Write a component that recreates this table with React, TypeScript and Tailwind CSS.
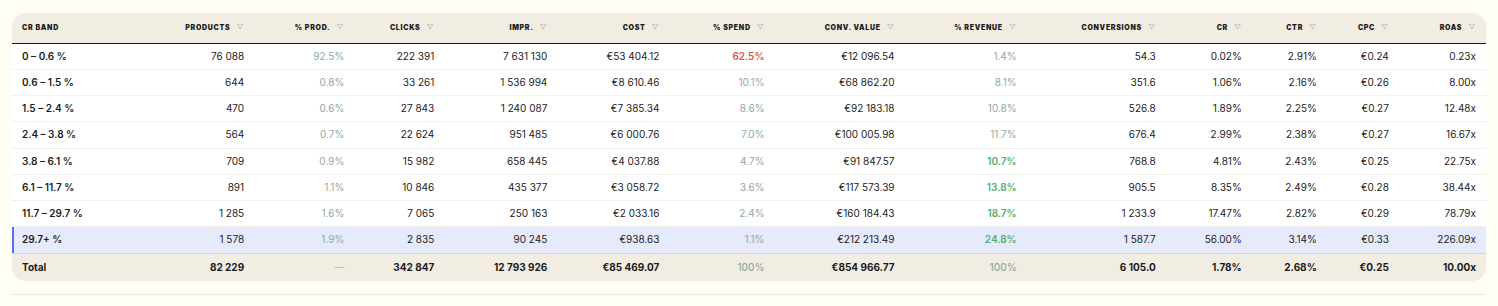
import React from "react";

type Row = {
  band: string;
  products: string;
  prodPct: string;
  clicks: string;
  impr: string;
  cost: string;
  spendPct: string;
  spendHot?: boolean;
  convValue: string;
  revPct: string;
  revGood?: boolean;
  conversions: string;
  cr: string;
  ctr: string;
  cpc: string;
  roas: string;
  active?: boolean;
};

const s = "\u00a0";

const rows: Row[] = [
  { band: "0 – 0.6 %", products: `76${s}088`, prodPct: "92.5%", clicks: `222${s}391`, impr: `7${s}631${s}130`, cost: `€53${s}404.12`, spendPct: "62.5%", spendHot: true, convValue: `€12${s}096.54`, revPct: "1.4%", conversions: "54.3", cr: "0.02%", ctr: "2.91%", cpc: "€0.24", roas: "0.23x" },
  { band: "0.6 – 1.5 %", products: "644", prodPct: "0.8%", clicks: `33${s}261`, impr: `1${s}536${s}994`, cost: `€8${s}610.46`, spendPct: "10.1%", convValue: `€68${s}862.20`, revPct: "8.1%", conversions: "351.6", cr: "1.06%", ctr: "2.16%", cpc: "€0.26", roas: "8.00x" },
  { band: "1.5 – 2.4 %", products: "470", prodPct: "0.6%", clicks: `27${s}843`, impr: `1${s}240${s}087`, cost: `€7${s}385.34`, spendPct: "8.6%", convValue: `€92${s}183.18`, revPct: "10.8%", conversions: "526.8", cr: "1.89%", ctr: "2.25%", cpc: "€0.27", roas: "12.48x" },
  { band: "2.4 – 3.8 %", products: "564", prodPct: "0.7%", clicks: `22${s}624`, impr: `951${s}485`, cost: `€6${s}000.76`, spendPct: "7.0%", convValue: `€100${s}005.98`, revPct: "11.7%", conversions: "676.4", cr: "2.99%", ctr: "2.38%", cpc: "€0.27", roas: "16.67x" },
  { band: "3.8 – 6.1 %", products: "709", prodPct: "0.9%", clicks: `15${s}982`, impr: `658${s}445`, cost: `€4${s}037.88`, spendPct: "4.7%", convValue: `€91${s}847.57`, revPct: "10.7%", revGood: true, conversions: "768.8", cr: "4.81%", ctr: "2.43%", cpc: "€0.25", roas: "22.75x" },
  { band: "6.1 – 11.7 %", products: "891", prodPct: "1.1%", clicks: `10${s}846`, impr: `435${s}377`, cost: `€3${s}058.72`, spendPct: "3.6%", convValue: `€117${s}573.39`, revPct: "13.8%", revGood: true, conversions: "905.5", cr: "8.35%", ctr: "2.49%", cpc: "€0.28", roas: "38.44x" },
  { band: "11.7 – 29.7 %", products: `1${s}285`, prodPct: "1.6%", clicks: `7${s}065`, impr: `250${s}163`, cost: `€2${s}033.16`, spendPct: "2.4%", convValue: `€160${s}184.43`, revPct: "18.7%", revGood: true, conversions: `1${s}233.9`, cr: "17.47%", ctr: "2.82%", cpc: "€0.29", roas: "78.79x" },
  { band: "29.7+ %", products: `1${s}578`, prodPct: "1.9%", clicks: `2${s}835`, impr: `90${s}245`, cost: "€938.63", spendPct: "1.1%", convValue: `€212${s}213.49`, revPct: "24.8%", revGood: true, conversions: `1${s}587.7`, cr: "56.00%", ctr: "3.14%", cpc: "€0.33", roas: "226.09x", active: true },
];

const muted = "text-[#8fa9a2]";

function Head({ label, w, first }: { label: string; w: string; first?: boolean }) {
  return (
    <th
      className={`${w} px-[10px] text-[7px] font-black uppercase tracking-[0.1em] whitespace-nowrap ${first ? "text-left" : "text-right"}`}
    >
      {label}
      {!first && <span className="ml-[6px] text-[7px] font-normal text-[#b9b9b2]">▽</span>}
    </th>
  );
}

function Cell({ children, className = "" }: { children: React.ReactNode; className?: string }) {
  return <td className={`px-[10px] text-right whitespace-nowrap ${className}`}>{children}</td>;
}

export default function App() {
  return (
    <div className="min-h-screen bg-[#fffef5] px-[12px] pt-[13px] font-['Inter','Liberation_Sans',sans-serif] text-[10px] text-[#1c1c1c]">
      <div className="overflow-hidden rounded-[14px] bg-white">
        <table className="w-full table-fixed border-collapse">
          <thead>
            <tr className="h-[30px] border-b-[1.5px] border-[#1c1c1c] bg-[#f2ede3]">
              <Head label="CR Band" w="w-[142px]" first />
              <Head label="Products" w="w-[100px]" />
              <Head label="% Prod." w="w-[100px]" />
              <Head label="Clicks" w="w-[90px]" />
              <Head label="Impr." w="w-[113px]" />
              <Head label="Cost" w="w-[112px]" />
              <Head label="% Spend" w="w-[105px]" />
              <Head label="Conv. Value" w="w-[130px]" />
              <Head label="% Revenue" w="w-[122px]" />
              <Head label="Conversions" w="w-[139px]" />
              <Head label="CR" w="w-[86px]" />
              <Head label="CTR" w="w-[75px]" />
              <Head label="CPC" w="w-[72px]" />
              <Head label="ROAS" w="w-[87px]" />
            </tr>
          </thead>
          <tbody>
            {rows.map((r) => (
              <tr
                key={r.band}
                className={`h-[26.25px] ${r.active ? "border-b border-[#c9d2f5] bg-[#e5eafd]" : "border-b border-[#f0f0ec]"}`}
              >
                <td
                  className={`px-[10px] text-left font-semibold whitespace-nowrap ${r.active ? "shadow-[inset_2px_0_0_#5b6cf0]" : ""}`}
                >
                  {r.band}
                </td>
                <Cell>{r.products}</Cell>
                <Cell className={muted}>{r.prodPct}</Cell>
                <Cell>{r.clicks}</Cell>
                <Cell>{r.impr}</Cell>
                <Cell>{r.cost}</Cell>
                <Cell className={r.spendHot ? "font-semibold text-[#e4533c]" : muted}>{r.spendPct}</Cell>
                <Cell>{r.convValue}</Cell>
                <Cell className={r.revGood ? "font-semibold text-[#4fae6d]" : muted}>{r.revPct}</Cell>
                <Cell>{r.conversions}</Cell>
                <Cell>{r.cr}</Cell>
                <Cell>{r.ctr}</Cell>
                <Cell>{r.cpc}</Cell>
                <Cell>{r.roas}</Cell>
              </tr>
            ))}
          </tbody>
          <tfoot>
            <tr className="h-[28px] bg-[#f2ede3] font-bold">
              <td className="px-[10px] text-left">Total</td>
              <Cell>{`82${s}229`}</Cell>
              <Cell className="font-normal text-[#a9bcb6]">—</Cell>
              <Cell>{`342${s}847`}</Cell>
              <Cell>{`12${s}793${s}926`}</Cell>
              <Cell>{`€85${s}469.07`}</Cell>
              <Cell className={`font-medium ${muted}`}>100%</Cell>
              <Cell>{`€854${s}966.77`}</Cell>
              <Cell className={`font-medium ${muted}`}>100%</Cell>
              <Cell>{`6${s}105.0`}</Cell>
              <Cell>1.78%</Cell>
              <Cell>2.68%</Cell>
              <Cell>€0.25</Cell>
              <Cell>10.00x</Cell>
            </tr>
          </tfoot>
        </table>
      </div>
      <div className="mt-[13px] border-t border-[#e9e9e3]" />
    </div>
  );
}
